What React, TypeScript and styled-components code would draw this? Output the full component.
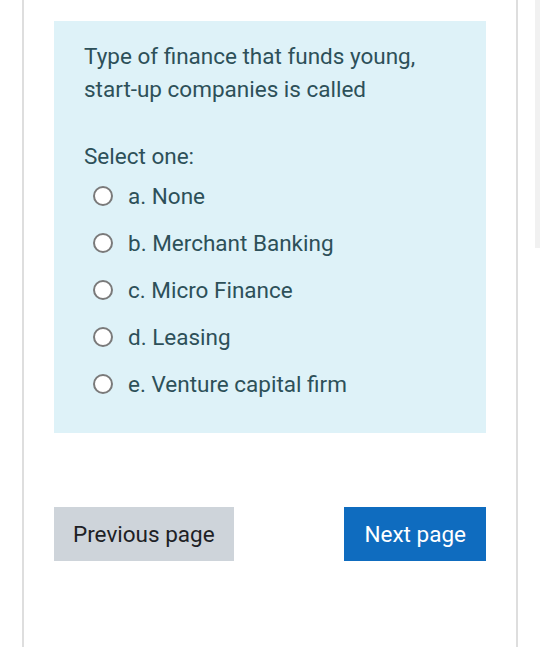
import * as React from "react";
import styled, { createGlobalStyle } from "styled-components";

const GlobalStyle = createGlobalStyle`
  html, body {
    margin: 0;
    padding: 0;
    background: #ffffff;
  }
  body {
    font-family: Roboto, "Liberation Sans", Arial, sans-serif;
  }
`;

const Page = styled.div`
  display: flex;
  align-items: flex-start;
  width: 540px;
  height: 647px;
  overflow: hidden;
`;

const Card = styled.div`
  margin-left: 22px;
  width: 496px;
  height: 647px;
  box-sizing: border-box;
  border-left: 2px solid #dedede;
  border-right: 2px solid #dedede;
  padding: 21px 30px 0 30px;
`;

const SideStrip = styled.div`
  margin-left: 17px;
  width: 5px;
  height: 248px;
  background: #f1f1f1;
`;

const Formulation = styled.div`
  background: #def2f8;
  color: #2d5059;
  padding: 19px 12px 34px 30px;
`;

const QuestionText = styled.p`
  margin: 0;
  font-size: 22.5px;
  line-height: 33px;
`;

const Prompt = styled.div`
  margin-top: 35px;
  font-size: 22.5px;
  line-height: 30px;
`;

const Answers = styled.div`
  display: flex;
  flex-direction: column;
  gap: 17px;
  margin-top: 10px;
  padding-left: 9px;
`;

const Option = styled.label`
  display: flex;
  align-items: center;
  gap: 15px;
  font-size: 22.5px;
  line-height: 30px;
`;

const Radio = styled.span`
  width: 20px;
  height: 20px;
  box-sizing: border-box;
  border: 2px solid #7a7a7a;
  border-radius: 50%;
  background: #ffffff;
  flex-shrink: 0;
`;

const Nav = styled.div`
  display: flex;
  justify-content: space-between;
  margin-top: 74px;
`;

const Button = styled.button<{ $primary?: boolean }>`
  height: 54px;
  padding: 0 ${({ $primary }) => ($primary ? "20px" : "19px")};
  border: none;
  border-radius: 0;
  font-family: Roboto, "Liberation Sans", Arial, sans-serif;
  font-size: 22.5px;
  background: ${({ $primary }) => ($primary ? "#0f6cbf" : "#ced4da")};
  color: ${({ $primary }) => ($primary ? "#ffffff" : "#1d2125")};
`;

const answers = [
  "a. None",
  "b. Merchant Banking",
  "c. Micro Finance",
  "d. Leasing",
  "e. Venture capital firm",
];

export default function App() {
  return (
    <>
      <GlobalStyle />
      <Page>
        <Card>
          <Formulation>
            <QuestionText>
              Type of finance that funds young,
              <br />
              start-up companies is called
            </QuestionText>
            <Prompt>Select one:</Prompt>
            <Answers>
              {answers.map((a) => (
                <Option key={a}>
                  <Radio />
                  {a}
                </Option>
              ))}
            </Answers>
          </Formulation>
          <Nav>
            <Button>Previous page</Button>
            <Button $primary>Next page</Button>
          </Nav>
        </Card>
        <SideStrip />
      </Page>
    </>
  );
}
